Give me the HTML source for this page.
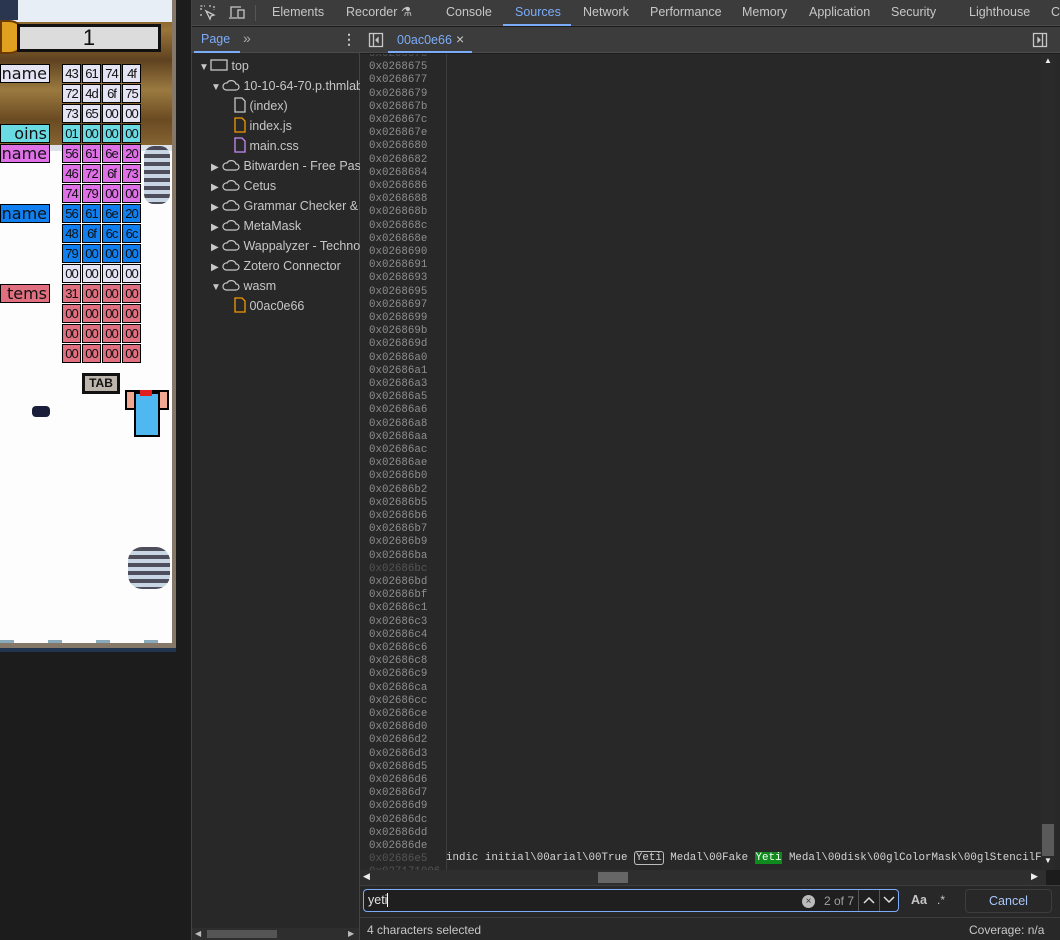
<!DOCTYPE html>
<html><head><meta charset="utf-8"><style>
*{margin:0;padding:0;box-sizing:border-box}
body{width:1060px;height:940px;overflow:hidden;background:#1c1c1c;font-family:"Liberation Sans",sans-serif;position:relative;font-size:12px;color:#e3e3e3}
.a{position:absolute}
.mono{font-family:"Liberation Mono",monospace}
.cell{position:absolute;width:19px;height:19px;border:1px solid #000;font-size:13px;color:#111;text-align:center;line-height:17px;font-family:"Liberation Sans Narrow","Liberation Sans",sans-serif;letter-spacing:-1px}
.lab{position:absolute;border:1px solid #000;font-size:16px;color:#111;text-align:right;padding-right:2px;height:19px;line-height:17px;font-family:"DejaVu Sans",sans-serif}
.tab{position:absolute;top:0;height:26px;line-height:25px;color:#c7c7c7;font-size:12.5px}
.tr{position:absolute;font-size:12.5px;color:#c7c7c7;height:20px;line-height:20px;white-space:nowrap}
.ln{position:absolute;left:9px;font-size:10.8px;color:#8e8e8e;font-family:"Liberation Mono",monospace}
</style></head><body>
<div class="a" style="left:0;top:0;width:176px;height:652px;background:#22354f"></div>
<div class="a" style="left:0;top:0;width:176px;height:648px;background:#857868"></div>
<div class="a" style="left:0;top:0;width:172px;height:643px;background:#fdfdfd"></div>
<div class="a" style="left:0;top:0;width:172px;height:150px;background:linear-gradient(#6b4a20,#9a7438 20%,#5f4220 40%,#9b7a40 60%,#6a4a22 80%,#8a6a35)"></div>
<div class="a" style="left:0;top:0;width:172px;height:22px;background:#e8eef5"></div>
<div class="a" style="left:0;top:0;width:18px;height:20px;background:#2a3550"></div>
<div class="a" style="left:0;top:20px;width:26px;height:34px;border-radius:0 17px 17px 0;background:#e0a020;border:2px solid #6b3b05"></div>
<div class="a" style="left:17px;top:24px;width:144px;height:28px;background:#dcdcdc;border:3px solid #111;text-align:center;font-size:22px;line-height:22px;color:#111">1</div>
<div class="a" style="left:0;top:145px;width:172px;height:6px;background:#dde2ea"></div>
<div class="lab" style="left:0;top:64px;width:50px;background:#e4e4f4">name</div>
<div class="lab" style="left:0;top:124px;width:50px;background:#6adbe3">oins</div>
<div class="lab" style="left:0;top:144px;width:50px;background:#e070e8">name</div>
<div class="lab" style="left:0;top:204px;width:50px;background:#1080f0">name</div>
<div class="lab" style="left:0;top:284px;width:50px;background:#e07080">tems</div>
<div id="grid"></div>
<div class="a" style="left:82px;top:373px;width:38px;height:21px;background:#bbb5ab;border:3px solid #111;font-size:12px;font-weight:bold;text-align:center;line-height:15px;color:#111">TAB</div>
<div class="a" style="left:32px;top:406px;width:18px;height:11px;background:#1a1e3a;border-radius:4px"></div>
<div class="a" style="left:125px;top:390px;width:44px;height:20px;background:#f0a890;border:2px solid #000"></div>
<div class="a" style="left:134px;top:392px;width:26px;height:45px;background:#4fb8f0;border:2px solid #000"></div>
<div class="a" style="left:140px;top:390px;width:12px;height:6px;background:#e02020"></div>
<div class="a" style="left:144px;top:146px;width:26px;height:58px;background:repeating-linear-gradient(#223 0 4px,#bcd 4px 8px);border-radius:10px;opacity:.8"></div>
<div class="a" style="left:128px;top:547px;width:42px;height:42px;background:repeating-linear-gradient(#223 0 4px,#bcd 4px 8px);border-radius:14px;opacity:.8"></div>
<div class="a" style="left:0;top:640px;width:172px;height:3px;background:repeating-linear-gradient(90deg,#8ab 0 14px,transparent 14px 48px)"></div>
<div class="a" style="left:191px;top:0;width:1px;height:940px;background:#444"></div>

<div class="a" style="left:192px;top:0;width:868px;height:26px;background:#3c3c3c;border-bottom:1px solid #4a4a4a"></div>
<svg class="a" style="left:200px;top:5px" width="16" height="16" viewBox="0 0 16 16" fill="none" stroke="#c7c7c7" stroke-width="1.3"><path d="M1 5V1h4M1 9v2M9 1h2M14 1v4" stroke-dasharray="2 1.5"/><path d="M6 6l8 4-3 1-1 3z"/></svg>
<svg class="a" style="left:228px;top:5px" width="18" height="16" viewBox="0 0 18 16" fill="none" stroke="#c7c7c7" stroke-width="1.3"><path d="M3 12V2h10M1 13h8"/><rect x="10" y="5" width="6" height="8"/></svg>
<div class="a" style="left:255px;top:5px;width:1px;height:16px;background:#555"></div>
<div class="tab" style="left:272px">Elements</div>
<div class="tab" style="left:346px">Recorder ⚗</div>
<div class="tab" style="left:446px">Console</div>
<div class="tab" style="left:515px;color:#7cacf8">Sources</div>
<div class="a" style="left:503px;top:24px;width:68px;height:2px;background:#7cacf8"></div>
<div class="tab" style="left:583px">Network</div>
<div class="tab" style="left:650px">Performance</div>
<div class="tab" style="left:742px">Memory</div>
<div class="tab" style="left:809px">Application</div>
<div class="tab" style="left:891px">Security</div>
<div class="tab" style="left:969px">Lighthouse</div>
<div class="tab" style="left:1051px">C</div>

<div class="a" style="left:192px;top:27px;width:168px;height:913px;background:#282828;border-right:1px solid #444"></div>
<div class="a" style="left:192px;top:27px;width:168px;height:26px;background:#3c3c3c;border-bottom:1px solid #4a4a4a"></div>
<div class="a" style="left:201px;top:32px;color:#7cacf8;font-size:12.5px">Page</div>
<div class="a" style="left:194px;top:51px;width:46px;height:2px;background:#7cacf8"></div>
<div class="a" style="left:243px;top:30px;color:#aaa;font-size:14px">»</div>
<div class="a" style="left:342px;top:31px;color:#c7c7c7;font-size:14px;font-weight:bold">⋮</div>
<div id="tree"></div>
<div class="a" style="left:192px;top:928px;width:167px;height:12px;background:#2e2e2e"></div>
<div class="a" style="left:207px;top:930px;width:70px;height:8px;background:#555"></div>
<div class="a" style="left:195px;top:929px;color:#bbb;font-size:8px">◀</div>
<div class="a" style="left:348px;top:929px;color:#bbb;font-size:8px">▶</div>

<div class="a" style="left:360px;top:27px;width:700px;height:26px;background:#3c3c3c;border-bottom:1px solid #4a4a4a"></div>
<svg class="a" style="left:368px;top:32px" width="16" height="16" viewBox="0 0 16 16" fill="none" stroke="#c7c7c7" stroke-width="1.3"><rect x="1.5" y="1.5" width="13" height="13"/><path d="M5.5 2v12"/><path d="M10 6l-2 2 2 2z" fill="#c7c7c7"/></svg>
<div class="a" style="left:397px;top:33px;color:#7cacf8;font-size:12.5px">00ac0e66</div>
<div class="a" style="left:456px;top:31px;color:#c7c7c7;font-size:14px">×</div>
<div class="a" style="left:388px;top:51px;width:84px;height:2px;background:#7cacf8"></div>
<svg class="a" style="left:1032px;top:32px" width="16" height="16" viewBox="0 0 16 16" fill="none" stroke="#c7c7c7" stroke-width="1.3"><rect x="1.5" y="1.5" width="13" height="13"/><path d="M10.5 2v12"/><path d="M6 6l2 2-2 2z" fill="#c7c7c7"/></svg>
<div class="a" style="left:360px;top:54px;width:700px;height:816px;background:#282828;overflow:hidden" id="ed"></div>
<div class="a" style="left:446px;top:54px;width:1px;height:816px;background:#3d3d3d"></div>
<div class="a" style="left:1041px;top:54px;width:14px;height:816px;background:#2a2a2a"></div>
<div class="a" style="left:1042px;top:824px;width:12px;height:32px;background:#5a5a5a"></div>
<div class="a" style="left:1044px;top:56px;color:#eee;font-size:8px">▲</div>
<div class="a" style="left:1044px;top:856px;color:#eee;font-size:8px">▼</div>
<div class="a mono" style="left:446px;top:851px;font-size:10.8px;line-height:15px;color:#d4d4d4;white-space:nowrap;width:595px;overflow:hidden">indic initial\00arial\00True <span style="border:1px solid #bbb;border-radius:3px;padding:0 1px">Yeti</span> Medal\00Fake <span style="background:#0f8a1c;color:#fff;padding:0 1px">Yeti</span> Medal\00disk\00glColorMask\00glStencilF</div>
<div class="a" style="left:360px;top:870px;width:686px;height:15px;background:#2e2e2e"></div>
<div class="a" style="left:598px;top:872px;width:30px;height:11px;background:#666"></div>
<div class="a" style="left:363px;top:871px;color:#eee;font-size:9px">◀</div>
<div class="a" style="left:1031px;top:871px;color:#eee;font-size:9px">▶</div>
<div class="a" style="left:360px;top:885px;width:700px;height:55px;background:#282828;border-top:1px solid #3d3d3d"></div>
<div class="a" style="left:363px;top:889px;width:536px;height:23px;border:1px solid #7cacf8;border-radius:4px;background:#1f1f1f"></div>
<div class="a" style="left:368px;top:893px;color:#e3e3e3;font-size:12.5px">yeti<span style="border-left:1px solid #fff"></span></div>
<div class="a" style="left:802px;top:895px;width:13px;height:13px;border-radius:50%;background:#bbb;color:#333;font-size:10px;text-align:center;line-height:13px">×</div>
<div class="a" style="left:824px;top:894px;color:#a0a0a0;font-size:12px">2 of 7</div>
<div class="a" style="left:858px;top:890px;width:1px;height:21px;background:#555"></div>
<div class="a" style="left:879px;top:890px;width:1px;height:21px;background:#555"></div>
<svg class="a" style="left:863px;top:895px" width="12" height="10"><path d="M1 8l5-5 5 5" stroke="#ddd" stroke-width="1.5" fill="none"/></svg>
<svg class="a" style="left:883px;top:895px" width="12" height="10"><path d="M1 2l5 5 5-5" stroke="#ddd" stroke-width="1.5" fill="none"/></svg>
<div class="a" style="left:911px;top:893px;color:#c7c7c7;font-size:12.5px;font-weight:bold">Aa</div>
<div class="a" style="left:937px;top:893px;color:#c7c7c7;font-size:12px">.*</div>
<div class="a" style="left:965px;top:889px;width:87px;height:24px;border:1px solid #3d3d3d;border-radius:4px;color:#a8c7fa;text-align:center;line-height:22px;font-size:12.5px">Cancel</div>
<div class="a" style="left:360px;top:917px;width:700px;height:1px;background:#3d3d3d"></div>
<div class="a" style="left:367px;top:923px;color:#c7c7c7;font-size:12px">4 characters selected</div>
<div class="a" style="left:969px;top:923px;color:#c7c7c7;font-size:12px">Coverage: n/a</div>

<script>
var g=[["43","61","74","4f","#e4e4f4"],["72","4d","6f","75","#e4e4f4"],["73","65","00","00","#e4e4f4"],["01","00","00","00","#6adbe3"],["56","61","6e","20","#e070e8"],["46","72","6f","73","#e070e8"],["74","79","00","00","#e070e8"],["56","61","6e","20","#1080f0"],["48","6f","6c","6c","#1080f0"],["79","00","00","00","#1080f0"],["00","00","00","00","#e4e4f4"],["31","00","00","00","#e07080"],["00","00","00","00","#e07080"],["00","00","00","00","#e07080"],["00","00","00","00","#e07080"]];
var h="";g.forEach(function(r,i){for(var j=0;j<4;j++)h+='<div class="cell" style="left:'+(62+j*20)+'px;top:'+(64+i*20)+'px;background:'+r[4]+'">'+r[j]+'</div>';});
document.getElementById("grid").innerHTML=h;
var cloud='<svg width="18" height="12" viewBox="0 0 18 12" style="vertical-align:-1px"><path d="M4 11h10a3 3 0 0 0 0-6 5 5 0 0 0-9-1 3.5 3.5 0 0 0-1 7z" fill="none" stroke="#c7c7c7" stroke-width="1.2"/></svg>';
function file(c){return '<svg width="12" height="16" viewBox="0 0 12 16" style="vertical-align:-3px"><path d="M1 1h7l3 3v11H1z" fill="none" stroke="'+c+'" stroke-width="1.3"/></svg>';}
var t=[[199,"▼",'<svg width="18" height="12" style="vertical-align:-1px"><rect x="1" y="1" width="16" height="10" fill="none" stroke="#c7c7c7" stroke-width="1.3"/></svg>',"top"],
[211,"▼",cloud,"10-10-64-70.p.thmlabs.com"],[223,"",file("#c7c7c7"),"(index)"],[223,"",file("#f29900"),"index.js"],[223,"",file("#c58af9"),"main.css"],
[211,"▶",cloud,"Bitwarden - Free Password Manager"],[211,"▶",cloud,"Cetus"],[211,"▶",cloud,"Grammar Checker &amp; Paraphraser"],[211,"▶",cloud,"MetaMask"],[211,"▶",cloud,"Wappalyzer - Technology profiler"],[211,"▶",cloud,"Zotero Connector"],[211,"▼",cloud,"wasm"],[223,"",file("#f29900"),"00ac0e66"]];
h="";t.forEach(function(r,i){h+='<div class="tr" style="left:'+r[0]+'px;top:'+(56+i*20)+'px;width:'+(360-r[0])+'px;overflow:hidden"><span style="font-size:10px;display:inline-block;width:11px;color:#c7c7c7">'+r[1]+'</span>'+r[2]+' '+r[3]+'</div>';});
document.getElementById("tree").innerHTML=h;
var a="673 675 677 679 67b 67c 67e 680 682 684 686 688 68b 68c 68e 690 691 693 695 697 699 69b 69d 6a0 6a1 6a3 6a5 6a6 6a8 6aa 6ac 6ae 6b0 6b2 6b5 6b6 6b7 6b9 6ba 6bc 6bd 6bf 6c1 6c3 6c4 6c6 6c8 6c9 6ca 6cc 6ce 6d0 6d2 6d3 6d5 6d6 6d7 6d9 6dc 6dd 6de 6e5 7100".split(" ");
h="";a.forEach(function(s,i){var dim=(s=="6bc"||s=="6e5"||s=="7100"||s=="673");h+='<div class="ln" style="top:'+(i*13.2-6)+'px;'+(dim?'color:#555':'')+'">0x02'+(s.length==3?"68"+s:"71"+s+"6")+'</div>';});
document.getElementById("ed").innerHTML=h;
</script>
</body></html>
